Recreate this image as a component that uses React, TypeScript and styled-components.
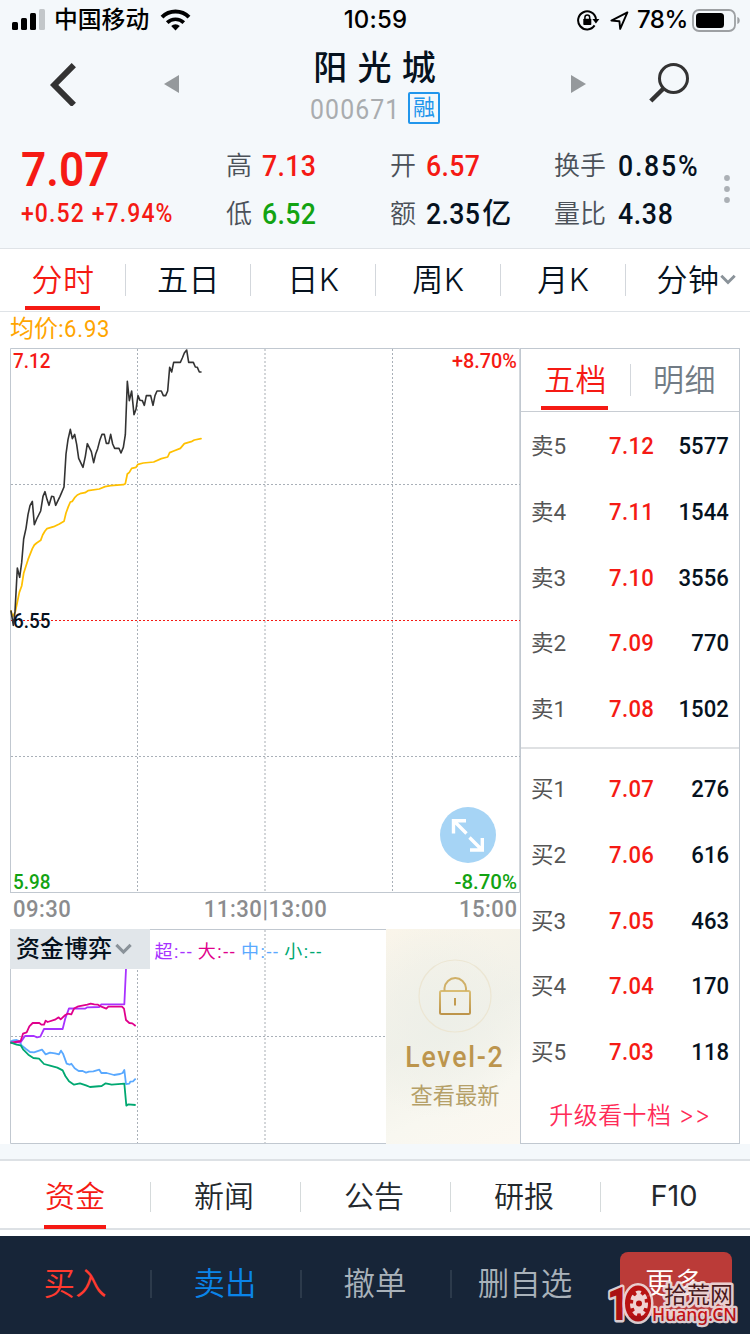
import React from "react";
import styled, { createGlobalStyle } from "styled-components";

const GlobalStyle = createGlobalStyle`
  * { box-sizing: border-box; }
  body {
    margin: 0;
    background: #fff;
    font-family: Roboto, "Noto Sans CJK SC", sans-serif;
    color: #06121e;
  }
`;

const RED = "#f51a14";
const GREEN = "#12a312";
const INK = "#06121e";

const Page = styled.div`
  width: 750px;
  height: 1334px;
  overflow: hidden;
  position: relative;
  display: flex;
  flex-direction: column;
`;

/* Narrow figures used for every price and volume. */
const Num = styled.span<{ $spacing?: number; $origin?: string }>`
  display: inline-block;
  white-space: nowrap;
  letter-spacing: ${(p) => p.$spacing ?? 0.4}px;
  transform: scaleX(0.92);
  transform-origin: ${(p) => p.$origin ?? "left"} center;
`;

/* ---------- top area ---------- */

const Top = styled.header`
  height: 249px;
  background: #f4f8fb;
  border-bottom: 1px solid #dfe3e7;
`;

const StatusBar = styled.div`
  height: 40px;
  display: grid;
  grid-template-columns: 1fr auto 1fr;
  align-items: center;
  padding: 0 10px 0 12px;
  color: #000;
  font: 450 24px/40px Inter, "Noto Sans CJK SC", sans-serif;
`;

const StatusSide = styled.div<{ $end?: boolean }>`
  display: flex;
  align-items: center;
  justify-content: ${(p) => (p.$end ? "flex-end" : "flex-start")};
`;

const Carrier = styled.span`
  margin: 0 11px 0 8px;
  font-size: 23.8px;
  font-weight: 500;
  line-height: 38px;
`;

const Clock = styled.span`
  letter-spacing: 0.2px;
  margin-right: 1px;
`;

const Percent = styled.span`
  margin: 0 4px 0 8px;
  letter-spacing: -0.4px;
`;

const TitleBar = styled.div`
  height: 88px;
  display: flex;
  align-items: center;
  padding-left: 50px;
`;

const PrevArrow = styled.svg`
  margin-left: 87px;
`;

const SearchIcon = styled.svg`
  margin-left: 63px;
  margin-top: -2px;
`;

const TitleCenter = styled.div`
  width: 392px;
  height: 88px;
  display: flex;
  flex-direction: column;
  align-items: center;
`;

const StockName = styled.h1`
  margin: 5px 0 0;
  font-size: 34px;
  line-height: 46px;
  font-weight: 500;
  letter-spacing: 0.9px;
`;

const CodeLine = styled.div`
  display: flex;
  align-items: center;
  gap: 9px;
  height: 34px;
  font-size: 27px;
  line-height: 34px;
  color: #a9acaf;
`;

const CodeText = styled.div`
  width: 89px;
  padding-top: 4px;
`;

const MarginBadge = styled.span`
  width: 32px;
  height: 32px;
  border: 2px solid #2196ec;
  border-radius: 2px;
  color: #2196ec;
  font-size: 22px;
  line-height: 27px;
  text-align: center;
`;

const QuoteRow = styled.section`
  height: 120px;
  display: flex;
  padding-top: 14px;
`;

const LastPrice = styled.div`
  width: 226px;
  padding-left: 21px;
  color: ${RED};
`;

const BigPrice = styled.div`
  font-size: 48px;
  font-weight: 600;
  line-height: 56px;
`;

const Change = styled.div`
  font-size: 25px;
  font-weight: 500;
  line-height: 31px;
`;

const StatGrid = styled.div`
  display: grid;
  grid-template-columns: 164px 164px 170px;
  grid-auto-rows: 48px;
`;

const Stat = styled.div<{ $gap?: number }>`
  display: flex;
  align-items: center;
  gap: ${(p) => p.$gap ?? 10}px;
  white-space: nowrap;
`;

const StatLabel = styled.span`
  font-size: 26px;
  line-height: 48px;
  font-weight: 350;
  color: #4b5159;
`;

const StatValue = styled.span<{ $color?: string }>`
  font-size: 29px;
  font-weight: 500;
  line-height: 48px;
  color: ${(p) => p.$color ?? INK};
`;

const Unit = styled.span`
  margin-left: -3px;
`;

const MoreDots = styled.svg`
  margin-top: 32px;
`;

/* ---------- period tabs ---------- */

const PeriodTabs = styled.nav`
  height: 63px;
  display: flex;
  border-bottom: 1px solid #dfe3e7;
  font-family: Inter, "Noto Sans CJK SC", sans-serif;
`;

const PeriodTab = styled.div<{ $active?: boolean }>`
  width: 125px;
  position: relative;
  display: flex;
  align-items: center;
  justify-content: center;
  padding-left: 1px;
  font-size: 31px;
  font-weight: 350;
  line-height: 62px;
  letter-spacing: 0.6px;
  color: ${(p) => (p.$active ? RED : INK)};
  & + & {
    padding-left: 2px;
    background: linear-gradient(#d3d7dc, #d3d7dc) 0 15px / 1px 32px no-repeat;
  }
`;

const MinuteLabel = styled.span`
  margin-left: 15px;
`;

const TabBar = styled.i<{ $width: number; $bottom?: number; $shift?: number }>`
  position: absolute;
  left: 50%;
  margin-left: ${(p) => -p.$width / 2 + (p.$shift ?? 0)}px;
  bottom: ${(p) => p.$bottom ?? 0}px;
  width: ${(p) => p.$width}px;
  height: 4px;
  background: ${RED};
`;

const AveragePrice = styled.div`
  height: 36px;
  padding-left: 10px;
  font-size: 24px;
  line-height: 35px;
  color: #ffa500;
`;

/* ---------- main area ---------- */

const Main = styled.main`
  height: 796px;
  display: flex;
  padding: 0 10px;
`;

const ChartColumn = styled.div`
  width: 510px;
  display: flex;
  flex-direction: column;
`;

const ChartFrame = styled.div`
  position: relative;
  height: 545px;
`;

const ChartSvg = styled.svg`
  display: block;
  font-family: Roboto, "Noto Sans CJK SC", sans-serif;
`;

const ExpandButton = styled.button`
  position: absolute;
  right: 24px;
  bottom: 30px;
  width: 56px;
  height: 56px;
  border: 0;
  border-radius: 50%;
  padding: 0;
  background: #a6d4f5;
`;

const TimeAxis = styled.div`
  height: 36px;
  display: flex;
  justify-content: space-between;
  padding: 0 3px;
  font-size: 24px;
  font-weight: 500;
  line-height: 33px;
  color: #8b8c8e;
`;

const MoneyFlow = styled.div`
  position: relative;
  height: 215px;
  display: flex;
`;

const FlowHeader = styled.div`
  position: absolute;
  inset: 0 auto auto 0;
  display: flex;
  align-items: center;
  height: 40px;
`;

const FlowPicker = styled.div`
  width: 140px;
  height: 40px;
  padding-left: 6px;
  display: flex;
  align-items: center;
  gap: 3px;
  background: #e1e6ea;
  font-size: 24px;
  line-height: 42px;
  font-weight: 500;
`;

const Legend = styled.span<{ $color: string }>`
  margin-left: 4.5px;
  color: ${(p) => p.$color};
  font-size: 18px;
  line-height: 40px;
  padding-top: 5px;
  letter-spacing: 1.6px;
`;

const LevelCard = styled.div`
  width: 134px;
  display: flex;
  flex-direction: column;
  align-items: center;
  padding: 30px 0 0 4px;
  background:
    radial-gradient(ellipse 90px 100px at 40% 42%, #edefe8 0%, rgba(237, 239, 232, 0) 100%),
    linear-gradient(155deg, #faf5ea 0%, #f1f1e9 45%, #f8f7f0 75%, #fcf8f1 100%);
`;

const LevelTitle = styled.div`
  margin-top: 7px;
  font-size: 29px;
  line-height: 34px;
  font-weight: 500;
  color: #bc954d;
`;

const LevelHint = styled.div`
  margin-top: 5px;
  font-size: 22.3px;
  line-height: 34px;
  color: #b5a068;
`;

/* ---------- order book ---------- */

const OrderBook = styled.aside`
  width: 220px;
  border: 1px solid #c1c8d0;
`;

const BookTabs = styled.div`
  height: 63px;
  display: flex;
  border-bottom: 1px solid #c8cdd3;
`;

const BookTab = styled.div<{ $active?: boolean }>`
  flex: 1;
  position: relative;
  text-align: center;
  font-size: 31px;
  font-weight: 350;
  line-height: 64px;
  letter-spacing: 0.5px;
  color: ${(p) => (p.$active ? RED : "#717b85")};
  & + & {
    background: linear-gradient(#d3d7dc, #d3d7dc) 0 15px / 1px 32px no-repeat;
  }
`;

const BookSide = styled.div<{ $top: number }>`
  padding: ${(p) => p.$top}px 10px 0;
`;

const BookRow = styled.div`
  height: 65.8px;
  display: grid;
  grid-template-columns: 78px 50px 1fr;
  font-size: 24px;
  line-height: 67px;
  font-weight: 500;
`;

const BookName = styled.span`
  font-size: 22.5px;
  font-weight: 400;
  color: #555;
`;

const BookPrice = styled.span`
  color: ${RED};
`;

const BookVolume = styled.span`
  text-align: right;
`;

const BookDivider = styled.div`
  height: 2px;
  margin-top: 5px;
  background: #dfe1e3;
`;

const Upgrade = styled.div`
  text-align: center;
  margin-top: 11px;
  font-family: Inter, "Noto Sans CJK SC", sans-serif;
  font-size: 24px;
  line-height: 40px;
  font-weight: 350;
  letter-spacing: 0.4px;
  color: #ff2b58;
`;

/* ---------- bottom ---------- */

const Strip = styled.div`
  height: 17px;
  background: #f4f8fb;
  border-bottom: 2px solid #dde1e5;
`;

const InfoTabs = styled.nav`
  height: 69px;
  display: flex;
  border-bottom: 2px solid #dde1e5;
  margin-bottom: 6px;
  font-family: Inter, "Noto Sans CJK SC", sans-serif;
`;

const InfoTab = styled.div<{ $active?: boolean; $latin?: boolean }>`
  width: 150px;
  position: relative;
  text-align: center;
  font-size: ${(p) => (p.$latin ? 29 : 30)}px;
  font-weight: ${(p) => (p.$latin ? 400 : 350)};
  line-height: ${(p) => (p.$latin ? 70 : 71)}px;
  color: ${(p) => (p.$active ? RED : "#23282d")};
  & + & {
    padding-right: 2px;
    background: linear-gradient(#d5dadb, #d5dadb) 0 21px / 1px 30px no-repeat;
  }
`;

const ActionBar = styled.footer`
  height: 98px;
  display: flex;
  background: #172538;
`;

const Action = styled.div<{ $color?: string }>`
  width: 150px;
  text-align: center;
  font-size: 31.5px;
  font-weight: 350;
  line-height: 98px;
  color: ${(p) => p.$color ?? "#a9b2ba"};
  & + & {
    background: linear-gradient(#2c3a4b, #2c3a4b) 0 34px / 2px 28px no-repeat;
  }
`;

const MoreButton = styled.button`
  margin: 16px 0 0 20px;
  width: 112px;
  height: 64px;
  border: 0;
  border-radius: 8px;
  padding: 0 3px 0 0;
  background: #bb3b38;
  color: #fff;
  font: 350 29.5px/62px Roboto, "Noto Sans CJK SC", sans-serif;
`;

const SiteMark = styled.svg`
  position: absolute;
  left: 600px;
  top: 1264px;
`;

/* ---------- data ---------- */

const priceLine =
  "33,813 40,856 45,815 52,684 59,712 65,668 71,597 78,565 84,524 90,497 97,484 103,554 110,537 122,513 129,469 135,455 141,478 147,496 155,469 161,470 167,496 180,469 192,441 198,342 204,299 211,268 217,296 224,283 230,313 236,355 249,382 256,349 262,311 274,335 281,368 287,342 293,326 300,299 306,283 313,283 319,310 326,310 332,283 338,312 344,325 357,325 363,339 370,322 376,284 382,124 388,182 395,153 402,224 408,208 414,167 420,181 427,182 433,196 439,167 452,167 459,196 465,167 471,153 484,153 490,167 497,167 503,153 509,82 515,96 521,67 541,67 547,54 553,39 560,30 566,67 580,67 586,81 592,82 598,96 603,96";
const averageLine =
  "33,813 38,830 46,815 52,786 58,757 65,738 71,700 84,659 97,626 103,615 110,609 122,601 128,585 135,573 141,566 161,560 178,552 192,544 198,519 205,500 211,486 217,484 224,473 232,465 243,460 255,458 264,452 298,447 315,440 332,437 370,434 376,431 382,402 388,397 395,385 408,382 414,373 430,369 461,366 484,356 503,351 509,338 521,333 541,325 553,311 576,304 583,300 603,296";

const flowLines = [
  {
    color: "#5aa9ff",
    points:
      "31,545 40,541 50,540 58,543 65,556 78,567 90,576 102,577 126,569 137,583 150,578 165,580 177,583 183,572 189,581 200,611 209,614 214,611 224,625 236,633 248,633 258,638 267,635 280,634 298,629 304,639 320,639 342,645 360,642 368,639 373,630 378,672 388,671 391,665 399,664 407,656",
  },
  {
    color: "#a832ff",
    points:
      "31,547 62,547 75,528 102,528 111,532 121,530 132,507 188,507 196,475 207,445 255,446 262,442 298,441 304,433 373,433 378,327",
  },
  {
    color: "#e0008c",
    points:
      "31,549 62,543 69,521 80,517 88,499 98,489 118,489 124,494 132,494 137,482 143,486 165,479 176,472 182,478 196,465 203,461 214,463 222,446 235,439 262,434 272,431 283,433 294,434 304,440 319,446 325,440 366,440 372,446 378,480 388,489 397,490 407,498",
  },
  {
    color: "#00a871",
    points:
      "31,547 50,554 62,556 70,569 85,584 100,594 117,596 132,612 150,617 172,623 188,631 196,648 207,664 222,674 240,670 258,676 270,681 305,678 317,670 335,674 373,671 379,737 385,733 407,735",
  },
];

const asks = [
  ["卖5", "7.12", "5577"],
  ["卖4", "7.11", "1544"],
  ["卖3", "7.10", "3556"],
  ["卖2", "7.09", "770"],
  ["卖1", "7.08", "1502"],
];
const bids = [
  ["买1", "7.07", "276"],
  ["买2", "7.06", "616"],
  ["买3", "7.05", "463"],
  ["买4", "7.04", "170"],
  ["买5", "7.03", "118"],
];

/* ---------- icons ---------- */

const SignalIcon = () => (
  <svg width="34" height="22" viewBox="0 0 34 22">
    <rect x="0" y="13" width="6" height="8" rx="1.5" />
    <rect x="9" y="9" width="6" height="12" rx="1.5" />
    <rect x="18" y="4" width="6" height="17" rx="1.5" />
    <rect x="27" y="0" width="6" height="21" rx="1.5" fill="#c3c7ca" />
  </svg>
);

const WifiIcon = () => (
  <svg width="31" height="22" viewBox="0 0 31 22" fill="none" stroke="#000" strokeWidth="4">
    <path d="M2 8.2a19 19 0 0 1 27 0" />
    <path d="M7.2 13.6a11.8 11.8 0 0 1 16.6 0" strokeWidth="3.6" />
    <path d="M15.5 21.5l-4.3-4.6a6.2 6.2 0 0 1 8.6 0z" fill="#000" stroke="none" />
  </svg>
);

const RotationLockIcon = () => (
  <svg width="23" height="21" viewBox="0 0 23 21" fill="none" stroke="#000" strokeWidth="2">
    <path d="M17.6 15.4A9 9 0 1 1 19 9" />
    <path d="M15.4 9h7l-3.5 4.4z" fill="#000" stroke="none" />
    <rect x="6.3" y="8.8" width="8" height="6.2" rx="0.8" fill="#000" stroke="none" />
    <path d="M7.9 9V7.4a2.4 2.4 0 0 1 4.8 0V9" strokeWidth="1.5" />
  </svg>
);

const ArrowMark = styled.svg`
  margin-left: 10px;
`;

const LocationIcon = () => (
  <ArrowMark width="19" height="19" viewBox="0 0 19 19" fill="none" stroke="#000" strokeWidth="1.9" strokeLinejoin="round">
    <path d="M17.4 1.4L1.4 9.6l8 .6.8 7.6z" />
  </ArrowMark>
);

const BatteryIcon = () => (
  <svg width="48" height="23" viewBox="0 0 48 23">
    <rect x="1" y="1" width="42" height="21" rx="6" fill="none" stroke="#9da0a3" strokeWidth="1.8" />
    <rect x="4" y="4" width="28" height="15" rx="3.5" />
    <path d="M45.3 8v7c1.6-.5 2.4-1.8 2.4-3.5S46.9 8.5 45.3 8z" fill="#9da0a3" />
  </svg>
);

const Caret = ({ size = 14 }: { size?: number }) => (
  <svg width={size} height={size * 0.7} viewBox="0 0 14 10" fill="none" stroke="#8a9299" strokeWidth="2.6">
    <path d="M1 1.6l6 6 6-6" />
  </svg>
);

const Rows = ({ rows }: { rows: string[][] }) => (
  <>
    {rows.map(([name, price, volume]) => (
      <BookRow key={name}>
        <BookName>{name}</BookName>
        <BookPrice>
          <Num>{price}</Num>
        </BookPrice>
        <BookVolume>
          <Num $spacing={0.1} $origin="right">{volume}</Num>
        </BookVolume>
      </BookRow>
    ))}
  </>
);

const dash = { strokeDasharray: "2 2", stroke: "#a9b0b8", strokeWidth: 1 };
const squeeze = { lengthAdjust: "spacingAndGlyphs" as const };

export default function App() {
  return (
    <Page>
      <GlobalStyle />
      <Top>
        <StatusBar>
          <StatusSide>
            <SignalIcon />
            <Carrier>中国移动</Carrier>
            <WifiIcon />
          </StatusSide>
          <Clock>10:59</Clock>
          <StatusSide $end>
            <RotationLockIcon />
            <LocationIcon />
            <Percent>78%</Percent>
            <BatteryIcon />
          </StatusSide>
        </StatusBar>

        <TitleBar>
          <svg width="27" height="44" viewBox="0 0 27 44" fill="none" stroke="#333" strokeWidth="6">
            <path d="M23.8 3.2L4.2 23l19.6 19.8" />
          </svg>
          <PrevArrow width="15" height="18" viewBox="0 0 15 18" fill="#95999c">
            <path d="M15 0v18L0 9z" />
          </PrevArrow>
          <TitleCenter>
            <StockName>阳 光 城</StockName>
            <CodeLine>
              <CodeText>
                <Num $spacing={1.2}>000671</Num>
              </CodeText>
              <MarginBadge>融</MarginBadge>
            </CodeLine>
          </TitleCenter>
          <svg width="15" height="18" viewBox="0 0 15 18" fill="#95999c">
            <path d="M0 0v18l15-9z" />
          </svg>
          <SearchIcon width="40" height="40" viewBox="0 0 40 40" fill="none" stroke="#333">
            <circle cx="24.5" cy="15.5" r="14" strokeWidth="3" />
            <path d="M14.5 25.5L1.8 38" strokeWidth="4.5" />
          </SearchIcon>
        </TitleBar>

        <QuoteRow>
          <LastPrice>
            <BigPrice>
              <Num $spacing={0.1}>7.07</Num>
            </BigPrice>
            <Change>
              <Num $spacing={1.2}>+0.52 +7.94%</Num>
            </Change>
          </LastPrice>
          <StatGrid>
            <Stat>
              <StatLabel>高</StatLabel>
              <StatValue $color={RED}>
                <Num>7.13</Num>
              </StatValue>
            </Stat>
            <Stat>
              <StatLabel>开</StatLabel>
              <StatValue $color={RED}>
                <Num>6.57</Num>
              </StatValue>
            </Stat>
            <Stat $gap={12}>
              <StatLabel>换手</StatLabel>
              <StatValue>
                <Num $spacing={1.9}>0.85%</Num>
              </StatValue>
            </Stat>
            <Stat>
              <StatLabel>低</StatLabel>
              <StatValue $color={GREEN}>
                <Num>6.52</Num>
              </StatValue>
            </Stat>
            <Stat>
              <StatLabel>额</StatLabel>
              <StatValue>
                <Num>2.35</Num>
                <Unit>亿</Unit>
              </StatValue>
            </Stat>
            <Stat $gap={12}>
              <StatLabel>量比</StatLabel>
              <StatValue>
                <Num $spacing={0.7}>4.38</Num>
              </StatValue>
            </Stat>
          </StatGrid>
          <MoreDots width="6" height="30" viewBox="0 0 6 30" fill="#abb0b5">
            <circle cx="3" cy="4" r="2.9" />
            <circle cx="3" cy="15" r="2.9" />
            <circle cx="3" cy="26" r="2.9" />
          </MoreDots>
        </QuoteRow>
      </Top>

      <PeriodTabs>
        <PeriodTab $active>
          分时
          <TabBar $width={75} $bottom={1} />
        </PeriodTab>
        <PeriodTab>五日</PeriodTab>
        <PeriodTab>日K</PeriodTab>
        <PeriodTab>周K</PeriodTab>
        <PeriodTab>月K</PeriodTab>
        <PeriodTab>
          <MinuteLabel>分钟</MinuteLabel>
          <Caret size={16} />
        </PeriodTab>
      </PeriodTabs>

      <AveragePrice>
        均价:<Num $spacing={0.9}>6.93</Num>
      </AveragePrice>

      <Main>
        <ChartColumn>
          <ChartFrame>
            <ChartSvg width="510" height="545" viewBox="10 348 510 545">
              <path d="M10.5 893V348.5H520M10 892.5H520" fill="none" stroke="#c1c8d0" />
              <path d="M519.5 348v545" stroke="#d3d8dd" />
              <path d="M137.5 349V892M392.5 349V892M11 484.5H520M11 756.5H520" {...dash} />
              <path d="M265 349V892" stroke="#d3d6d9" strokeWidth="2" strokeDasharray="2 2" />
              <path d="M11 620.5H520" stroke={RED} strokeDasharray="2 2" />
              <g transform="translate(0 340) scale(0.33333)" fill="none" strokeLinejoin="round" strokeLinecap="round">
                <polyline points={averageLine} stroke="#ffc000" strokeWidth="5.2" />
                <polyline points={priceLine} stroke="#333" strokeWidth="4.8" />
              </g>
              <g fontSize="20" fontWeight="500">
                <text x="13" y="368" fill={RED} textLength="37.5" {...squeeze}>7.12</text>
                <text x="452" y="368" fill={RED} textLength="65" {...squeeze}>+8.70%</text>
                <text x="13" y="628" fill={INK} textLength="37.5" {...squeeze}>6.55</text>
                <text x="13" y="889" fill={GREEN} textLength="37.5" {...squeeze}>5.98</text>
                <text x="454.5" y="889" fill={GREEN} textLength="62.5" {...squeeze}>-8.70%</text>
              </g>
            </ChartSvg>
            <ExpandButton aria-label="全屏">
              <svg width="56" height="56" viewBox="0 0 56 56" fill="none" stroke="#fff" strokeWidth="3.4">
                <path d="M26.5 26.5L14 14M13.5 26.5V13.8H26" />
                <path d="M29.5 30.5L42 43M42.3 31v12H30" />
              </svg>
            </ExpandButton>
          </ChartFrame>

          <TimeAxis>
            <Num $spacing={0.5}>09:30</Num>
            <Num $spacing={0.6} $origin="53%">11:30|13:00</Num>
            <Num $spacing={0.5} $origin="right">15:00</Num>
          </TimeAxis>

          <MoneyFlow>
            <ChartSvg width="376" height="215" viewBox="10 929 376 215">
              <path d="M386 929.5H10.5V1143.5H386" fill="none" stroke="#c1c8d0" />
              <path d="M137.5 930V1143M11 1036.5H386" {...dash} />
              <path d="M265 930V1143" stroke="#d3d6d9" strokeWidth="2" strokeDasharray="2 2" />
              <g transform="translate(0 860) scale(0.33333)" fill="none" strokeLinejoin="round">
                {flowLines.map((line) => (
                  <polyline key={line.color} points={line.points} stroke={line.color} strokeWidth="5.4" />
                ))}
              </g>
            </ChartSvg>
            <FlowHeader>
              <FlowPicker>
                资金博弈
                <Caret size={17} />
              </FlowPicker>
              <Legend $color="#a832ff">超:--</Legend>
              <Legend $color="#e0008c">大:--</Legend>
              <Legend $color="#5aa9ff">中:--</Legend>
              <Legend $color="#00a871">小:--</Legend>
            </FlowHeader>
            <LevelCard>
              <svg width="74" height="74" viewBox="0 0 74 74" fill="none">
                <defs>
                  <linearGradient id="gold" x1="0" y1="0" x2="0" y2="1">
                    <stop offset="0" stopColor="#d9bd74" />
                    <stop offset="1" stopColor="#bd944a" />
                  </linearGradient>
                </defs>
                <circle cx="37" cy="37" r="36" stroke="#ece6d3" strokeWidth="1.2" />
                <rect x="22" y="32" width="30" height="23" rx="1.5" stroke="url(#gold)" strokeWidth="2" />
                <path d="M26.5 32v-3a10.8 11 0 0 1 21.5 0v3" stroke="#d0b068" strokeWidth="2" />
                <path d="M37 39v7.5" stroke="#c29b50" strokeWidth="2" />
              </svg>
              <LevelTitle>
                <Num $spacing={1.9} $origin="center">Level-2</Num>
              </LevelTitle>
              <LevelHint>查看最新</LevelHint>
            </LevelCard>
          </MoneyFlow>
        </ChartColumn>

        <OrderBook>
          <BookTabs>
            <BookTab $active>
              五档
              <TabBar $width={67} $bottom={1} $shift={-1} />
            </BookTab>
            <BookTab>明细</BookTab>
          </BookTabs>
          <BookSide $top={1}>
            <Rows rows={asks} />
          </BookSide>
          <BookDivider />
          <BookSide $top={7}>
            <Rows rows={bids} />
          </BookSide>
          <Upgrade>升级看十档 &gt;&gt;</Upgrade>
        </OrderBook>
      </Main>

      <Strip />
      <InfoTabs>
        <InfoTab $active>
          资金
          <TabBar $width={62} $bottom={-1} />
        </InfoTab>
        <InfoTab>新闻</InfoTab>
        <InfoTab>公告</InfoTab>
        <InfoTab>研报</InfoTab>
        <InfoTab $latin>F10</InfoTab>
      </InfoTabs>

      <ActionBar>
        <Action $color="#ff3a2f">买入</Action>
        <Action $color="#0a84e8">卖出</Action>
        <Action>撤单</Action>
        <Action>删自选</Action>
        <MoreButton>更多</MoreButton>
      </ActionBar>

      <SiteMark width="146" height="70" viewBox="600 1264 146 70">
        <g opacity="0.9" stroke="#eedfe0" strokeWidth="5" strokeLinejoin="round" paintOrder="stroke" fill="#b90f0f">
          <text x="607" y="1320" fontFamily="Roboto, sans-serif" fontWeight="900" fontSize="47" textLength="22" lengthAdjust="spacingAndGlyphs">1</text>
          <ellipse cx="638" cy="1303.5" rx="13" ry="18" />
          <text x="664" y="1303" fontFamily="Noto Sans CJK SC, sans-serif" fontSize="23" textLength="69" fill="#3d1418">拾荒网</text>
          <text x="652" y="1321" fontFamily="Noto Sans, sans-serif" fontWeight="500" fontSize="17.5" textLength="85" lengthAdjust="spacingAndGlyphs" fill="#c80f12" strokeWidth="4.5">Huang.CN</text>
        </g>
        <ellipse cx="639" cy="1303.5" rx="6" ry="10" fill="#f0d3d3" />
        <ellipse cx="639" cy="1303.5" rx="7" ry="11" fill="none" stroke="#f0d3d3" strokeWidth="4" strokeDasharray="4.5 3.5" />
        <circle cx="639" cy="1303.5" r="3" fill="#b5100f" />
      </SiteMark>
    </Page>
  );
}
